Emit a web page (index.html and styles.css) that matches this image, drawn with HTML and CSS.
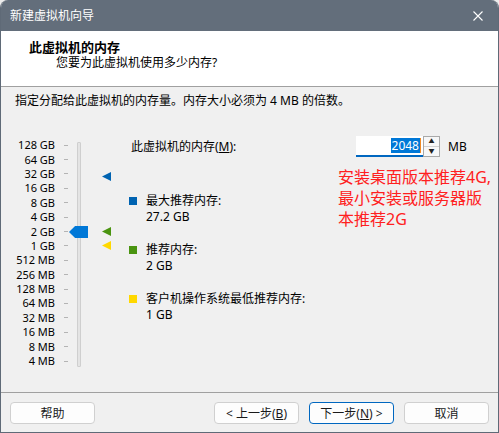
FILE: index.html
```html
<!DOCTYPE html>
<html lang="zh-CN">
<head>
<meta charset="UTF-8">
<meta name="viewport" content="width=device-width, initial-scale=1.0">
<title>新建虚拟机向导</title>
<link rel="stylesheet" href="styles.css">
</head>
<body>

<div class="window">
  <div class="titlebar">
    <span class="title">新建虚拟机向导</span>
    <svg class="close" width="10" height="10" viewBox="0 0 10 10">
      <path d="M0.5 0.5 L9.5 9.5 M9.5 0.5 L0.5 9.5" stroke="#fff" stroke-width="1.1" fill="none"/>
    </svg>
  </div>

  <div class="header">
    <div class="header-title">此虚拟机的内存</div>
    <div class="header-sub">您要为此虚拟机使用多少内存?</div>
  </div>

  <p class="desc">指定分配给此虚拟机的内存量。内存大小必须为 4 MB 的倍数。</p>

  <div class="main">
    <div class="slider">
      <ul class="scale">
        <li><span class="lbl">128 GB</span><i class="tick"></i></li>
        <li><span class="lbl">64 GB</span><i class="tick"></i></li>
        <li><span class="lbl">32 GB</span><i class="tick"></i></li>
        <li><span class="lbl">16 GB</span><i class="tick"></i></li>
        <li><span class="lbl">8 GB</span><i class="tick"></i></li>
        <li><span class="lbl">4 GB</span><i class="tick"></i></li>
        <li><span class="lbl">2 GB</span><i class="tick"></i></li>
        <li><span class="lbl">1 GB</span><i class="tick"></i></li>
        <li><span class="lbl">512 MB</span><i class="tick"></i></li>
        <li><span class="lbl">256 MB</span><i class="tick"></i></li>
        <li><span class="lbl">128 MB</span><i class="tick"></i></li>
        <li><span class="lbl">64 MB</span><i class="tick"></i></li>
        <li><span class="lbl">32 MB</span><i class="tick"></i></li>
        <li><span class="lbl">16 MB</span><i class="tick"></i></li>
        <li><span class="lbl">8 MB</span><i class="tick"></i></li>
        <li><span class="lbl">4 MB</span><i class="tick"></i></li>
      </ul>
      <div class="track"></div>
      <div class="thumb"></div>
      <span class="mark mark-max"></span>
      <span class="mark mark-rec"></span>
      <span class="mark mark-min"></span>
    </div>

    <div class="info">
      <div class="mem-row">
        <label class="mem-label">此虚拟机的内存(<u>M</u>):</label>
        <div class="mem-input"><span class="sel">2048</span></div>
        <div class="spin">
          <span class="spin-btn">&#9650;</span>
          <span class="spin-btn">&#9660;</span>
        </div>
        <span class="unit">MB</span>
      </div>

      <div class="details">
        <div class="legend">
          <div class="legend-item">
            <span class="swatch swatch-max"></span>
            <div>最大推荐内存:<br>27.2 GB</div>
          </div>
          <div class="legend-item">
            <span class="swatch swatch-rec"></span>
            <div>推荐内存:<br>2 GB</div>
          </div>
          <div class="legend-item">
            <span class="swatch swatch-min"></span>
            <div>客户机操作系统最低推荐内存:<br>1 GB</div>
          </div>
        </div>
        <div class="note">安装桌面版本推荐4G,<br>最小安装或服务器版<br>本推荐2G</div>
      </div>
    </div>
  </div>

  <div class="footer">
    <button class="btn">帮助</button>
    <div class="btn-group">
      <button class="btn">&lt; 上一步(<u>B</u>)</button>
      <button class="btn btn-default">下一步(<u>N</u>) &gt;</button>
      <button class="btn">取消</button>
    </div>
  </div>
</div>

</body>
</html>
```

FILE: styles.css
```css
body {
  margin: 0;
  background: #ececec;
  font-family: "Noto Sans", "Noto Sans CJK SC", sans-serif;
  font-size: 12px;
  color: #000;
}

.window {
  width: 499px;
  height: 433px;
  box-sizing: border-box;
  display: flex;
  flex-direction: column;
  background: #f0f0f0;
  border: 1px solid #5f6a77;
  border-top: none;
  border-radius: 8px 8px 0 0;
  overflow: hidden;
}

.titlebar {
  height: 31px;
  margin: 0 -1px;
  padding: 0 16px 0 10px;
  display: flex;
  align-items: center;
  justify-content: space-between;
  background: #636e7b;
  color: #fff;
  flex-shrink: 0;
}

.title {
  line-height: 16px;
}

.header {
  height: 56px;
  box-sizing: border-box;
  padding: 8px 0 0 28px;
  background: #fff;
  border-bottom: 1px solid #a0a0a0;
  flex-shrink: 0;
}

.header-title {
  font-weight: bold;
  font-size: 13px;
  line-height: 16px;
}

.header-sub {
  padding-left: 27px;
  line-height: 16px;
}

.desc {
  margin: 0;
  padding: 6px 14px 0;
  line-height: 16px;
}

.main {
  flex: 1;
  display: flex;
  margin-top: 27px;
}

/* slider on the left */
.slider {
  position: relative;
  width: 128px;
  flex-shrink: 0;
  display: flex;
  padding-top: 2px;
}

.scale {
  list-style: none;
  margin: 0;
  padding: 0;
}

.scale li {
  display: flex;
  align-items: center;
  height: 14.4px;
}

.lbl {
  width: 54px;
  text-align: right;
  font-size: 11px;
  line-height: 14px;
  color: #000;
}

.tick {
  width: 4px;
  height: 1px;
  margin-left: 9px;
  background: #b4b4b4;
}

.track {
  width: 2px;
  height: 223px;
  margin: 4px 0 0 9px;
  background: #e4e4e4;
  border: 1px solid #cfcfcf;
  border-radius: 1px;
}

.thumb {
  position: absolute;
  left: 68px;
  top: 90px;
  width: 19px;
  height: 12px;
  background: #0078d7;
  clip-path: polygon(0 50%, 32% 0, 100% 0, 100% 100%, 32% 100%);
}

.mark {
  position: absolute;
  left: 101px;
  width: 9px;
  height: 9px;
  clip-path: polygon(0 50%, 100% 0, 100% 100%);
}

.mark-max {
  top: 36px;
  background: #0063b1;
}

.mark-rec {
  top: 91px;
  background: #4a9410;
}

.mark-min {
  top: 105px;
  background: #ffd800;
}

/* right side */
.info {
  flex: 1;
}

.mem-row {
  display: flex;
  align-items: center;
  height: 21px;
}

.mem-label {
  width: 225px;
  padding-left: 2px;
  line-height: 16px;
}

.mem-input {
  width: 67px;
  height: 21px;
  box-sizing: border-box;
  padding: 1px 2px 0 0;
  background: #fff;
  border-bottom: 2px solid #0067c0;
  text-align: right;
}

.sel {
  display: inline-block;
  padding: 0 1px;
  background: #0078d7;
  color: #fff;
  line-height: 15px;
  border-right: 1px solid #f08a24;
}

.spin {
  width: 17px;
  height: 21px;
  box-sizing: border-box;
  border: 1px solid #a9a9a9;
  display: flex;
  flex-direction: column;
  background: #f7f7f7;
}

.spin-btn {
  flex: 1;
  font-size: 6px;
  line-height: 9px;
  text-align: center;
  color: #222;
}

.spin-btn + .spin-btn {
  border-top: 1px solid #d0d0d0;
}

.unit {
  margin-left: 8px;
  line-height: 16px;
}

.details {
  display: flex;
}

.legend {
  width: 209px;
  margin-top: 36px;
  display: flex;
  flex-direction: column;
  gap: 17px;
}

.legend-item {
  display: flex;
  line-height: 16px;
}

.swatch {
  width: 8px;
  height: 8px;
  margin: 4px 9px 0 0;
  flex-shrink: 0;
}

.swatch-max { background: #0063b1; }
.swatch-rec { background: #4a9410; }
.swatch-min { background: #ffd800; }

.note {
  margin-top: 10px;
  font-size: 16px;
  line-height: 21px;
  color: #ff2020;
  white-space: nowrap;
}

.footer {
  display: flex;
  justify-content: space-between;
  padding: 9px 9px 8px;
  border-top: 1px solid #a0a0a0;
  flex-shrink: 0;
}

.btn-group {
  display: flex;
  gap: 10px;
}

.btn {
  width: 85px;
  height: 22px;
  padding: 0;
  font-family: inherit;
  font-size: 12px;
  color: #1a1a1a;
  background: #fdfdfd;
  border: 1px solid #d0d0d0;
  border-radius: 4px;
}

.btn-default {
  border-color: #0067c0;
}
```
